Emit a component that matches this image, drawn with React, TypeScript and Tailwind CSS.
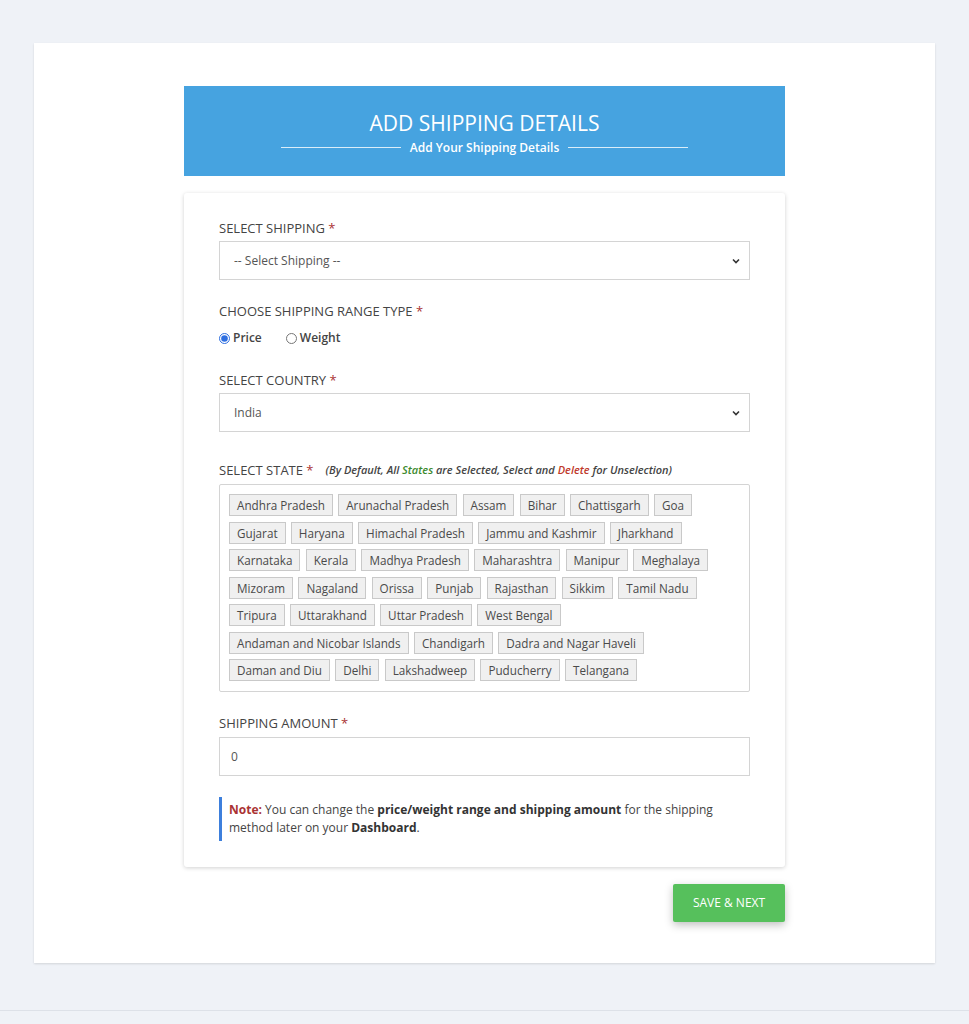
import React, { useState } from 'react';

const STATES = [
  'Andhra Pradesh', 'Arunachal Pradesh', 'Assam', 'Bihar', 'Chattisgarh', 'Goa',
  'Gujarat', 'Haryana', 'Himachal Pradesh', 'Jammu and Kashmir', 'Jharkhand',
  'Karnataka', 'Kerala', 'Madhya Pradesh', 'Maharashtra', 'Manipur', 'Meghalaya',
  'Mizoram', 'Nagaland', 'Orissa', 'Punjab', 'Rajasthan', 'Sikkim', 'Tamil Nadu',
  'Tripura', 'Uttarakhand', 'Uttar Pradesh', 'West Bengal',
  'Andaman and Nicobar Islands', 'Chandigarh', 'Dadra and Nagar Haveli',
  'Daman and Diu', 'Delhi', 'Lakshadweep', 'Puducherry', 'Telangana',
];

const Label: React.FC<{ children: React.ReactNode }> = ({ children }) => (
  <div className="text-[13px] text-[#444] uppercase mb-[4px] leading-[18px]">
    {children} <span className="text-[#a33]">*</span>
  </div>
);

const Chevron = () => (
  <svg width="10" height="10" viewBox="0 0 10 10" className="absolute right-[9px] top-1/2 -translate-y-1/2 pointer-events-none">
    <path d="M2 3.5 L5 6.5 L8 3.5" fill="none" stroke="#333" strokeWidth="1.6" />
  </svg>
);

const SelectBox: React.FC<{ value: string; options: string[] }> = ({ value, options }) => (
  <div className="relative">
    <select
      defaultValue={value}
      className="appearance-none w-full h-[39px] border border-[#d4d4d4] bg-white px-[14px] text-[12px] text-[#555] outline-none"
    >
      {options.map((o) => (
        <option key={o}>{o}</option>
      ))}
    </select>
    <Chevron />
  </div>
);

export default function App() {
  const [range, setRange] = useState<'price' | 'weight'>('price');
  const [states, setStates] = useState<string[]>(STATES);

  return (
    <div className="min-h-[1024px] bg-[#eff2f7] pt-[43px] font-['Open_Sans',sans-serif]">
      <div className="mx-[34px] bg-white shadow-[0_1px_2px_rgba(0,0,0,0.12)] pt-[43px] pb-[41px]">
        <div className="w-[601px] mx-auto">
          <div className="bg-[#46a3e0] h-[90px] flex flex-col items-center justify-center text-white pt-[2px]">
            <h1 className="text-[21px] leading-[28px] font-normal">ADD SHIPPING DETAILS</h1>
            <div className="flex items-center gap-[9px] mt-[3px]">
              <span className="w-[120px] h-px bg-white/80" />
              <span className="text-[12px] font-semibold leading-[16px]">Add Your Shipping Details</span>
              <span className="w-[120px] h-px bg-white/80" />
            </div>
          </div>

          <div className="mt-[17px] bg-white rounded-[3px] shadow-[0_1px_4px_rgba(0,0,0,0.18)] px-[35px] pt-[26px] pb-[26px]">
            <Label>Select Shipping</Label>
            <SelectBox value="-- Select Shipping --" options={['-- Select Shipping --', 'Standard', 'Express']} />

            <div className="mt-[22px]">
              <Label>Choose Shipping Range Type</Label>
              <div className="flex items-center gap-[24px] text-[12px] font-semibold text-[#444] mt-[9px]">
                <label className="flex items-center gap-[3px]">
                  <input
                    type="radio"
                    checked={range === 'price'}
                    onChange={() => setRange('price')}
                    className="w-[11px] h-[11px] m-0 accent-[#2f6fe0]"
                  />
                  Price
                </label>
                <label className="flex items-center gap-[3px]">
                  <input
                    type="radio"
                    checked={range === 'weight'}
                    onChange={() => setRange('weight')}
                    className="w-[11px] h-[11px] m-0 accent-[#2f6fe0]"
                  />
                  Weight
                </label>
              </div>
            </div>

            <div className="mt-[24px]">
              <Label>Select Country</Label>
              <SelectBox value="India" options={['India', 'United States', 'United Kingdom']} />
            </div>

            <div className="mt-[29px]">
              <div className="text-[13px] text-[#444] uppercase mb-[5px] leading-[18px] flex items-center">
                <span>
                  Select State <span className="text-[#a33]">*</span>
                </span>
                <span className="normal-case italic font-semibold text-[11px] text-[#444] ml-[12px]">
                  (By Default, All <span className="text-[#3c8a2e]">States</span> are Selected, Select and{' '}
                  <span className="text-[#c0392b]">Delete</span> for Unselection)
                </span>
              </div>
              <div className="border border-[#d4d4d4] rounded-[2px] pl-[9px] pr-[18px] pt-[9px] pb-[10px] flex flex-wrap gap-x-[5.3px] gap-y-[5.5px]">
                {states.map((s) => (
                  <button
                    key={s}
                    onClick={() => setStates(states.filter((x) => x !== s))}
                    className="h-[22px] px-[7px] bg-[#f0f0f0] border border-[#c9c9c9] text-[11.7px] text-[#4a4a4a] leading-[20px]"
                  >
                    {s}
                  </button>
                ))}
              </div>
            </div>

            <div className="mt-[22px]">
              <div className="text-[13px] text-[#444] uppercase mb-[5px] leading-[18px]">
                Shipping Amount <span className="text-[#a33]">*</span>
              </div>
              <input
                type="text"
                defaultValue="0"
                className="w-full h-[39px] border border-[#d4d4d4] px-[11px] text-[12px] text-[#555] outline-none"
              />
            </div>

            <div className="mt-[21px] border-l-[3px] border-[#3d7fdc] pl-[7px] py-[4px] text-[12px] leading-[18px] text-[#444]">
              <span className="font-bold text-[#a33]">Note:</span> You can change the{' '}
              <b className="text-[#333]">price/weight range and shipping amount</b> for the shipping method later on your{' '}
              <b className="text-[#333]">Dashboard</b>.
            </div>
          </div>

          <div className="flex justify-end mt-[17px]">
            <button className="h-[38px] w-[112px] bg-[#56c05c] text-white text-[12px] rounded-[2px] shadow-[0_3px_8px_rgba(0,0,0,0.25)]">
              SAVE &amp; NEXT
            </button>
          </div>
        </div>
      </div>
      <div className="mt-[47px] border-t border-[#dde1e8] h-[16px]" />
    </div>
  );
}
